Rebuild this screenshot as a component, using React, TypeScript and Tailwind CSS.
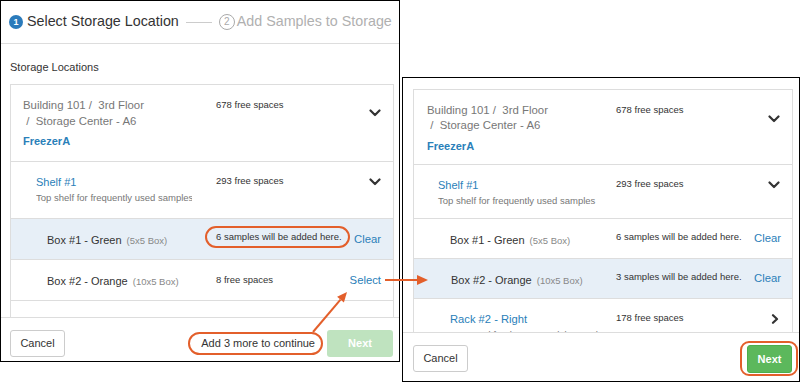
import React from "react";

const ChevronDown = () => (
  <svg width="12" height="8" viewBox="0 0 12 8" className="block">
    <path d="M1.5 1.5 L6 6 L10.5 1.5" fill="none" stroke="#333" strokeWidth="2.2" strokeLinecap="round" strokeLinejoin="round" />
  </svg>
);

const ChevronRight = () => (
  <svg width="8" height="10" viewBox="0 0 8 10" className="block">
    <path d="M2 1.2 L6 5 L2 8.8" fill="none" stroke="#333" strokeWidth="2.2" strokeLinecap="round" strokeLinejoin="round" />
  </svg>
);

function LeftPanel() {
  return (
    <div className="absolute left-0 top-0 w-[400px] h-[362px] border border-black bg-white flex flex-col">
      <div className="h-[43px] shrink-0 border-b border-[#dddddd] flex items-center pl-[8px] whitespace-nowrap overflow-hidden">
        <span className="w-[14px] h-[14px] shrink-0 rounded-full bg-[#2b7bbb] text-white text-[9px] leading-none font-bold flex items-center justify-center">1</span>
        <span className="ml-[4px] text-[14.3px] text-[#333333]">Select Storage Location</span>
        <span className="ml-[7px] w-[26px] h-px shrink-0 bg-[#cccccc]" />
        <span className="ml-[7px] w-[16px] h-[16px] shrink-0 rounded-full border border-[#aaaaaa] text-[#aaaaaa] text-[10px] leading-none flex items-center justify-center">2</span>
        <span className="ml-[2px] text-[14.3px] text-[#b0b0b0]">Add Samples to Storage</span>
      </div>
      <div className="flex-1 overflow-hidden pl-[9px] pr-[5px]">
        <div className="pt-[15px] h-[31px] text-[11px] leading-[16px] text-[#333333]">Storage Locations</div>
        <div className="mt-[9px] border border-[#dddddd]">
          <div className="h-[77px] border-b border-[#dddddd] flex items-start">
            <div className="w-[205px] shrink-0 pl-[12px] pt-[12px] text-[11.4px] leading-[16.4px] text-[#777777]">
              <div className="whitespace-pre">Building 101 /  3rd Floor</div>
              <div className="whitespace-pre"> /  Storage Center - A6</div>
              <div className="mt-[3px] text-[11px] leading-[16px] font-bold text-[#2a80b9]">FreezerA</div>
            </div>
            <div className="flex-1 pt-[13px] text-[9.5px] leading-[13px] text-[#333333]">678 free spaces</div>
            <div className="pr-[12px] pt-[24px]"><ChevronDown /></div>
          </div>
          <div className="h-[57px] border-b border-[#dddddd] flex items-start">
            <div className="w-[205px] shrink-0 pl-[25px] pr-[24px] pt-[13px]">
              <div className="text-[11px] leading-[14px] text-[#2a80b9]">Shelf #1</div>
              <div className="mt-[2px] text-[9.5px] leading-[13px] text-[#777777] whitespace-nowrap overflow-hidden">Top shelf for frequently used samples</div>
            </div>
            <div className="flex-1 pt-[12px] text-[9.5px] leading-[13px] text-[#333333]">293 free spaces</div>
            <div className="pr-[12px] pt-[16px]"><ChevronDown /></div>
          </div>
          <div className="h-[41px] border-b border-[#dddddd] bg-[#e7eff7] flex items-center">
            <div className="w-[205px] shrink-0 pl-[36px] whitespace-nowrap">
              <span className="text-[11px] text-[#333333]">Box #1 - Green</span>
              <span className="ml-[5px] text-[9.5px] text-[#888888]">(5x5 Box)</span>
            </div>
            <div className="flex-1 text-[9.5px] text-[#333333] -mt-[3px]">6 samples will be added here.</div>
            <div className="pr-[12px] text-[11.3px] text-[#2a80b9]">Clear</div>
          </div>
          <div className="h-[41px] border-b border-[#dddddd] flex items-center">
            <div className="w-[205px] shrink-0 pl-[36px] whitespace-nowrap">
              <span className="text-[11px] text-[#333333]">Box #2 - Orange</span>
              <span className="ml-[5px] text-[9.5px] text-[#888888]">(10x5 Box)</span>
            </div>
            <div className="flex-1 text-[9.5px] text-[#333333]">8 free spaces</div>
            <div className="pr-[12px] text-[11.3px] text-[#2a80b9]">Select</div>
          </div>
          <div className="h-[57px]" />
        </div>
      </div>
      <div className="h-[44px] shrink-0 border-t border-[#dddddd] flex items-start pt-[12px] pl-[9px] pr-[6px]">
        <button className="w-[55px] h-[27px] border border-[#cccccc] rounded-[3px] bg-white text-[11px] text-[#333333]">Cancel</button>
        <div className="ml-auto mr-[12px] h-[27px] flex items-center text-[11px] text-[#333333]">Add 3 more to continue</div>
        <button className="w-[66px] h-[27px] rounded-[3px] bg-[#bfe3bf] text-white text-[11px] font-bold">Next</button>
      </div>
    </div>
  );
}

function RightPanel() {
  return (
    <div className="absolute left-[402px] top-[77px] w-[398px] h-[305px] border border-black bg-white flex flex-col">
      <div className="flex-1 overflow-hidden pl-[10px] pr-[6px] pt-[11px]">
        <div className="border border-[#dddddd]">
          <div className="h-[75px] border-b border-[#dddddd] flex items-start">
            <div className="w-[202px] shrink-0 pl-[13px] pt-[12.5px] text-[11.4px] leading-[15.5px] text-[#777777]">
              <div className="whitespace-pre">Building 101 /  3rd Floor</div>
              <div className="whitespace-pre"> /  Storage Center - A6</div>
              <div className="mt-[4px] text-[11px] leading-[16px] font-bold text-[#2a80b9]">FreezerA</div>
            </div>
            <div className="flex-1 pt-[12.5px] text-[9.5px] leading-[13px] text-[#333333]">678 free spaces</div>
            <div className="pr-[12px] pt-[25px]"><ChevronDown /></div>
          </div>
          <div className="h-[54px] border-b border-[#dddddd] flex items-start">
            <div className="w-[202px] shrink-0 pl-[24px] pt-[13px]">
              <div className="text-[11px] leading-[14px] text-[#2a80b9]">Shelf #1</div>
              <div className="mt-[2px] text-[9.5px] leading-[13px] text-[#777777] whitespace-nowrap">Top shelf for frequently used samples</div>
            </div>
            <div className="flex-1 pt-[12px] text-[9.5px] leading-[13px] text-[#333333]">293 free spaces</div>
            <div className="pr-[12px] pt-[16px]"><ChevronDown /></div>
          </div>
          <div className="h-[40px] border-b border-[#dddddd] flex items-center">
            <div className="w-[202px] shrink-0 pl-[36px] whitespace-nowrap">
              <span className="text-[11px] text-[#333333]">Box #1 - Green</span>
              <span className="ml-[5px] text-[9.5px] text-[#888888]">(5x5 Box)</span>
            </div>
            <div className="flex-1 text-[9.5px] text-[#333333] -mt-[3px]">6 samples will be added here.</div>
            <div className="pr-[11px] text-[11.3px] text-[#2a80b9]">Clear</div>
          </div>
          <div className="h-[40px] border-b border-[#dddddd] bg-[#e7eff7] flex items-center">
            <div className="w-[202px] shrink-0 pl-[37px] whitespace-nowrap">
              <span className="text-[11px] text-[#333333]">Box #2 - Orange</span>
              <span className="ml-[5px] text-[9.5px] text-[#888888]">(10x5 Box)</span>
            </div>
            <div className="flex-1 text-[9.5px] text-[#333333] -mt-[3px]">3 samples will be added here.</div>
            <div className="pr-[11px] text-[11.3px] text-[#2a80b9]">Clear</div>
          </div>
          <div className="h-[57px] flex items-start">
            <div className="w-[202px] shrink-0 pl-[36px] pt-[13px]">
              <div className="text-[11.2px] leading-[14px] text-[#2a80b9]">Rack #2 - Right</div>
              <div className="mt-[2px] text-[9.5px] leading-[13px] text-[#777777] whitespace-nowrap">Reserved for the Orange lab samples</div>
            </div>
            <div className="flex-1 pt-[12px] text-[9.5px] leading-[13px] text-[#333333]">178 free spaces</div>
            <div className="pr-[13px] pt-[15px]"><ChevronRight /></div>
          </div>
        </div>
      </div>
      <div className="h-[49px] shrink-0 border-t border-[#dddddd] flex items-start pt-[12px] pl-[10px] pr-[7px]">
        <button className="w-[55px] h-[27px] border border-[#cccccc] rounded-[3px] bg-white text-[11px] text-[#333333]">Cancel</button>
        <button className="ml-auto w-[45px] h-[28px] rounded-[3px] bg-[#5cb85c] border border-[#4cae4c] text-white text-[11px] font-bold">Next</button>
      </div>
    </div>
  );
}

export default function App() {
  return (
    <div className="relative w-[800px] h-[382px] overflow-hidden bg-white font-['Liberation_Sans',Arial,sans-serif]">
      <LeftPanel />
      <RightPanel />
      <div className="absolute left-[205px] top-[226px] w-[145px] h-[22px] rounded-full border-2 border-[#e35f2b] pointer-events-none" />
      <div className="absolute left-[188px] top-[332px] w-[135px] h-[23px] rounded-full border-2 border-[#e35f2b] pointer-events-none" />
      <div className="absolute left-[740px] top-[341px] w-[58px] h-[35px] rounded-[9px] border-2 border-[#e35f2b] pointer-events-none" />
      <svg className="absolute left-0 top-0 pointer-events-none" width="800" height="382" viewBox="0 0 800 382">
        <line x1="313" y1="332" x2="340.5" y2="299.6" stroke="#e35f2b" strokeWidth="2" />
        <polygon points="347,292 343.9,302.5 337.1,296.7" fill="#e35f2b" />
        <line x1="385" y1="280" x2="418" y2="280" stroke="#e35f2b" strokeWidth="2" />
        <polygon points="417,275 428,280 417,285" fill="#e35f2b" />
      </svg>
    </div>
  );
}
